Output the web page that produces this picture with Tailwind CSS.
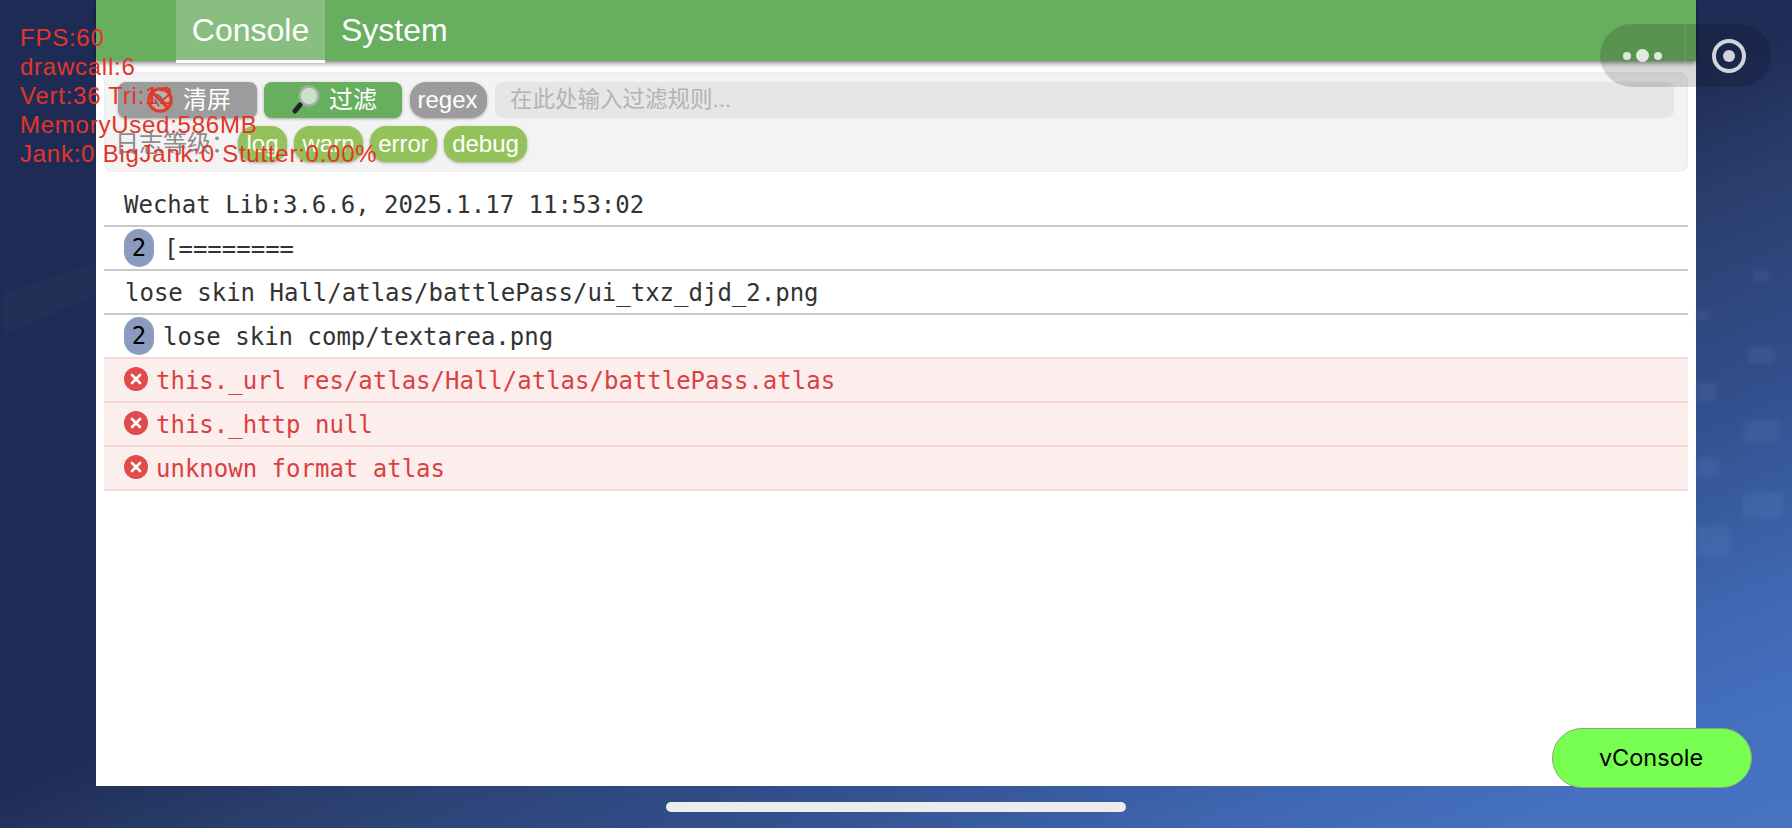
<!DOCTYPE html>
<html lang="en">

<head>
    <meta charset="UTF-8">
    <meta name="viewport" content="width=device-width, initial-scale=1.0">
    <title>vConsole</title>
    <script src="https://cdn.jsdelivr.net/npm/@tailwindcss/browser@4"></script>
</head>

<body class="relative w-[1792px] h-[828px] overflow-hidden bg-[linear-gradient(157deg,#1e2c55_0%,#1f2d56_50%,#2a3e6c_58%,#32508e_72%,#3f66b0_84%,#4470bf_92%,#4673c2_100%)] font-['Liberation_Sans',sans-serif]">
    <!-- panel -->
    <main class="mx-[96px] h-[786px] bg-white flex flex-col">
        <header class="h-[61px] bg-[#68ae5f] flex pl-[80px] shadow-[0_2px_5px_rgba(0,0,0,0.5)] relative">
            <div class="w-[149px] h-[63px] bg-[#88bf80] border-b-[3px] border-white text-white text-[32px] flex items-center justify-center pb-[1px]">Console</div>
            <div class="px-[16px] h-[61px] text-white text-[32px] flex items-center pb-[1px]">System</div>
        </header>

        <section class="mx-[8px] mt-[11px] h-[100px] bg-[#f3f3f3] border-2 border-[#efefef] rounded-lg px-[12px] pt-[8px] font-['Liberation_Sans','Noto_Sans_CJK_SC',sans-serif]">
            <div class="flex gap-[7px] h-[36px]">
                <button class="w-[139px] h-[36px] bg-[#9c9c9c] rounded-lg text-white text-[24px] flex items-center gap-[9px] shadow-[0_1px_3px_rgba(0,0,0,0.3)] pl-[28px]">
                    <svg class="w-[28px] h-[28px]" viewBox="0 0 30 30">
                        <circle cx="15" cy="15" r="12" fill="#f3d6d0" fill-opacity="0.35" stroke="#de3f2a" stroke-width="3.5" />
                        <path d="M11 9c4 1 8 6 9 11M9 14c2 2 4 5 5 8" stroke="#6f6f6f" stroke-width="2" fill="none" />
                        <path d="M7 7 23 23" stroke="#de3f2a" stroke-width="3.5" />
                    </svg>
                    <span>清屏</span>
                </button>
                <button class="w-[138px] h-[36px] bg-[#68ae5f] rounded-lg text-white text-[24px] flex items-center gap-[8px] shadow-[0_1px_3px_rgba(0,0,0,0.3)] pl-[27px]">
                    <svg class="w-[30px] h-[30px]" viewBox="0 0 30 30">
                        <circle cx="18" cy="11" r="9.5" fill="#c9e2c9" stroke="#a3aea3" stroke-width="2.5" />
                        <path d="M9 20 4 26" stroke="#222" stroke-width="5" stroke-linecap="round" />
                    </svg>
                    <span>过滤</span>
                </button>
                <button class="w-[77px] h-[36px] bg-[#9c9c9c] rounded-[16px] text-white text-[24px] flex items-center justify-center shadow-[0_1px_3px_rgba(0,0,0,0.3)] ml-[1px] pr-[2px]">regex</button>
                <div class="w-[1179px] h-[36px] bg-[#e6e6e6] rounded-lg text-[#b3b3b3] text-[22.5px] flex items-center pl-[15px] ml-[1px]">在此处输入过滤规则...</div>
            </div>
            <div class="flex items-center h-[36px] mt-[8px]">
                <span class="w-[123px] -ml-[3px] text-[#8c8c8c] text-[24px] whitespace-nowrap">日志等级：</span>
                <div class="flex gap-[7px] text-white text-[24px]">
                    <span class="w-[49px] h-[36px] bg-[#94c25a] rounded-[16px] flex items-center justify-center shadow-[0_1px_3px_rgba(0,0,0,0.3)]">log</span>
                    <span class="w-[69px] h-[36px] bg-[#94c25a] rounded-[16px] flex items-center justify-center shadow-[0_1px_3px_rgba(0,0,0,0.3)]">warn</span>
                    <span class="w-[67px] h-[36px] bg-[#94c25a] rounded-[16px] flex items-center justify-center shadow-[0_1px_3px_rgba(0,0,0,0.3)]">error</span>
                    <span class="w-[83px] h-[36px] bg-[#94c25a] rounded-[16px] flex items-center justify-center shadow-[0_1px_3px_rgba(0,0,0,0.3)]">debug</span>
                </div>
            </div>
        </section>

        <!-- log rows -->
        <ul class="mx-[8px] mt-[11px] font-['DejaVu_Sans_Mono',monospace] text-[24px] text-[#333333]">
            <li class="h-[44px] border-b-2 border-[#c9c9c9] flex items-center pl-[20px] pt-[1px]">Wechat Lib:3.6.6, 2025.1.17 11:53:02</li>
            <li class="h-[44px] border-b-2 border-[#c9c9c9] flex items-center pl-[20px] pt-[1px]">
                <span class="w-[30px] h-[38px] mb-[2px] bg-[#8a9bbf] rounded-[15px] text-black flex items-center justify-center">2</span>
                <span class="ml-[10px]">[========</span>
            </li>
            <li class="h-[44px] border-b-2 border-[#c9c9c9] flex items-center pl-[21px] pt-[1px]">lose skin Hall/atlas/battlePass/ui_txz_djd_2.png</li>
            <li class="h-[44px] border-b-2 border-[#f7d5d5] flex items-center pl-[20px] pt-[1px]">
                <span class="w-[30px] h-[38px] mb-[2px] bg-[#8a9bbf] rounded-[15px] text-black flex items-center justify-center">2</span>
                <span class="ml-[9px]">lose skin comp/textarea.png</span>
            </li>
            <li class="h-[44px] border-b-2 border-[#f7d5d5] bg-[#fdeeee] text-[#dc3f3f] flex items-center pl-[20px] pt-[1px]">
                <svg class="w-[24px] h-[24px] mb-[3px]" viewBox="0 0 24 24"><circle cx="12" cy="12" r="12" fill="#e04b4b" /><path d="M8 8l8 8M16 8l-8 8" stroke="#fff" stroke-width="2.6" stroke-linecap="round" /></svg>
                <span class="ml-[8px]">this._url res/atlas/Hall/atlas/battlePass.atlas</span>
            </li>
            <li class="h-[44px] border-b-2 border-[#f7d5d5] bg-[#fdeeee] text-[#dc3f3f] flex items-center pl-[20px] pt-[1px]">
                <svg class="w-[24px] h-[24px] mb-[3px]" viewBox="0 0 24 24"><circle cx="12" cy="12" r="12" fill="#e04b4b" /><path d="M8 8l8 8M16 8l-8 8" stroke="#fff" stroke-width="2.6" stroke-linecap="round" /></svg>
                <span class="ml-[8px]">this._http null</span>
            </li>
            <li class="h-[44px] border-b-2 border-[#f7d5d5] bg-[#fdeeee] text-[#dc3f3f] flex items-center pl-[20px] pt-[1px]">
                <svg class="w-[24px] h-[24px] mb-[3px]" viewBox="0 0 24 24"><circle cx="12" cy="12" r="12" fill="#e04b4b" /><path d="M8 8l8 8M16 8l-8 8" stroke="#fff" stroke-width="2.6" stroke-linecap="round" /></svg>
                <span class="ml-[8px]">unknown format atlas</span>
            </li>
        </ul>
    </main>

    <!-- wallpaper bits in the side strips -->
    <svg class="absolute left-0 top-[250px] w-[96px] h-[100px]" viewBox="0 0 96 100"><path d="M4 43 96 12V45L4 85Z" fill="#fff" fill-opacity="0.02" /></svg>
    <span class="absolute left-[1753px] top-[270px] w-[16px] h-[12px] bg-[#6f8fd0]/15 blur-[2px]"></span>
    <span class="absolute left-[1696px] top-[310px] w-[14px] h-[10px] bg-[#6f8fd0]/15 blur-[2px]"></span>
    <span class="absolute left-[1748px] top-[347px] w-[26px] h-[16px] bg-[#6f8fd0]/15 blur-[2px]"></span>
    <span class="absolute left-[1696px] top-[383px] w-[20px] h-[18px] bg-[#6f8fd0]/15 blur-[2px]"></span>
    <span class="absolute left-[1744px] top-[420px] w-[34px] h-[22px] bg-[#6f8fd0]/15 blur-[2px]"></span>
    <span class="absolute left-[1696px] top-[457px] w-[24px] h-[20px] bg-[#6f8fd0]/15 blur-[2px]"></span>
    <span class="absolute left-[1743px] top-[492px] w-[40px] h-[26px] bg-[#6f8fd0]/15 blur-[2px]"></span>
    <span class="absolute left-[1696px] top-[526px] w-[34px] h-[30px] bg-[#6f8fd0]/15 blur-[2px]"></span>

    <!-- stats overlay -->
    <div class="absolute left-[20px] top-[23px] text-[#e2352a] text-[24px] leading-[29px] tracking-[0.75px] whitespace-nowrap">
        <div>FPS:60</div>
        <div>drawcall:6</div>
        <div>Vert:36 Tri:12</div>
        <div>MemoryUsed:586MB</div>
        <div>Jank:0 BigJank:0 Stutter:0.00%</div>
    </div>

    <!-- capsule -->
    <div class="absolute left-[1600px] top-[24px] w-[171px] h-[63px] rounded-full bg-black/15 flex">
        <div class="w-[86px] flex items-center justify-center gap-[5px] border-r border-white/10">
            <span class="w-[8px] h-[8px] rounded-full bg-white/80"></span>
            <span class="w-[13px] h-[13px] rounded-full bg-white/80"></span>
            <span class="w-[8px] h-[8px] rounded-full bg-white/80"></span>
        </div>
        <div class="flex-1 flex items-center justify-center">
            <span class="w-[34px] h-[34px] rounded-full border-[4px] border-white/80 flex items-center justify-center">
                <span class="w-[12px] h-[12px] rounded-full bg-white/80"></span>
            </span>
        </div>
    </div>

    <button class="absolute left-[1552px] top-[728px] w-[200px] h-[60px] rounded-full bg-[#76ff50] border border-[#8aa87a] text-black text-[23.5px] font-['Inter',sans-serif] pr-[2px]">vConsole</button>

    <div class="absolute left-[666px] top-[802px] w-[460px] h-[10px] rounded-full bg-[#ececec]"></div>
</body>

</html>
